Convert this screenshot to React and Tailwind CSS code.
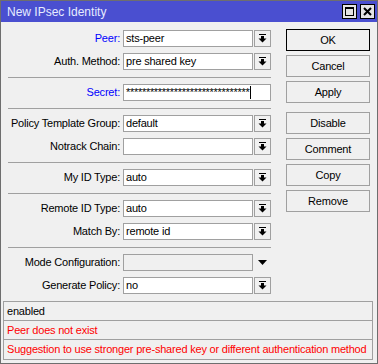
import React from 'react';

const font = { fontFamily: '"Liberation Sans", Arial, sans-serif' };

const DropBtn = () => (
  <div className="ml-[1px] w-[17px] h-[17px] border border-[#a0a0a0] bg-[#f0f0f0] flex items-center justify-center">
    <svg width="9" height="9" viewBox="0 0 9 9">
      <rect x="1" y="0" width="7" height="1" fill="#000" />
      <rect x="3" y="2" width="3" height="3" fill="#000" />
      <polygon points="0.5,4.5 8.5,4.5 4.5,8.5" fill="#000" />
    </svg>
  </div>
);

const Row = ({ label, value, blue, kind = 'select' }) => (
  <div className="flex items-center h-[23px]">
    <div className={`w-[119px] text-right whitespace-nowrap ${blue ? 'text-[#0000ff]' : 'text-[#000]'}`}>{label}:</div>
    {kind === 'secret' ? (
      <div className="ml-[3px] w-[148px] h-[17px] border border-[#a0a0a0] bg-white flex items-center pl-[2px] overflow-hidden">
        <span className="tracking-[-0.3px]">{'*'.repeat(31)}</span>
        <span className="ml-[1px] w-px h-[13px] bg-black" />
      </div>
    ) : (
      <div className={`ml-[3px] w-[130px] h-[17px] border border-[#a0a0a0] flex items-center pl-[2px] ${kind === 'disabled' ? 'bg-[#f0f0f0]' : 'bg-white'}`}>
        {value}
      </div>
    )}
    {kind === 'select' && <DropBtn />}
    {kind === 'disabled' && (
      <div className="ml-[1px] w-[17px] h-[17px] flex items-center justify-center">
        <svg width="9" height="5" viewBox="0 0 9 5">
          <polygon points="0,0 9,0 4.5,5" fill="#000" />
        </svg>
      </div>
    )}
  </div>
);

const Sep = () => <div className="ml-[7px] w-[263px] mt-[4px] mb-[3px] h-px bg-[#a0a0a0]" />;

const Btn = ({ children, primary }) => (
  <div className={`h-[22px] flex items-center justify-center text-[#000] bg-[#f0f0f0] border ${primary ? 'border-black' : 'border-[#a0a0a0]'}`}>
    {children}
  </div>
);

export default function App() {
  return (
    <div style={font} className="w-[378px] h-[364px] border border-[#6e6e6e] bg-[#f0f0f0] flex flex-col text-[11px] leading-none tracking-[-0.2px]">
      <div className="h-[21px] bg-[#4a4fd0] flex items-center justify-between pl-[6px] pr-[2px]">
        <span className="text-[12px] tracking-normal text-[#e6ecff]">New IPsec Identity</span>
        <div className="flex gap-[3px]">
          <div className="w-[15px] h-[15px] bg-[#e4e4e4] border border-black flex items-center justify-center">
            <div className="w-[9px] h-[9px] border border-black border-t-2" />
          </div>
          <div className="w-[15px] h-[15px] bg-[#e4e4e4] border border-black flex items-center justify-center">
            <svg width="9" height="9" viewBox="0 0 9 9">
              <path d="M1 1 L8 8 M8 1 L1 8" stroke="#000" strokeWidth="2" />
            </svg>
          </div>
        </div>
      </div>

      <div className="flex">
        <div className="w-[272px] pt-[5px]">
          <Row label="Peer" value="sts-peer" blue />
          <Row label="Auth. Method" value="pre shared key" />
          <Sep />
          <Row label="Secret" blue kind="secret" />
          <Sep />
          <Row label="Policy Template Group" value="default" />
          <Row label="Notrack Chain" value="" />
          <Sep />
          <Row label="My ID Type" value="auto" />
          <Sep />
          <Row label="Remote ID Type" value="auto" />
          <Row label="Match By" value="remote id" />
          <Sep />
          <Row label="Mode Configuration" value="" kind="disabled" />
          <Row label="Generate Policy" value="no" />
        </div>
        <div className="ml-[13px] w-[84px] pt-[7px] flex flex-col gap-[4px]">
          <Btn primary>OK</Btn>
          <Btn>Cancel</Btn>
          <Btn>Apply</Btn>
          <div className="h-px" />
          <Btn>Disable</Btn>
          <Btn>Comment</Btn>
          <Btn>Copy</Btn>
          <Btn>Remove</Btn>
        </div>
      </div>

      <div className="mt-auto mb-[3px] ml-[2px] w-[370px] border border-[#a0a0a0] divide-y divide-[#a0a0a0]">
        <div className="h-[19px] flex items-center pl-[3px] text-black">enabled</div>
        <div className="h-[19px] flex items-center pl-[3px] text-[#ff0000]">Peer does not exist</div>
        <div className="h-[19px] flex items-center pl-[3px] text-[#ff0000] whitespace-nowrap">Suggestion to use stronger pre-shared key or different authentication method</div>
      </div>
    </div>
  );
}
